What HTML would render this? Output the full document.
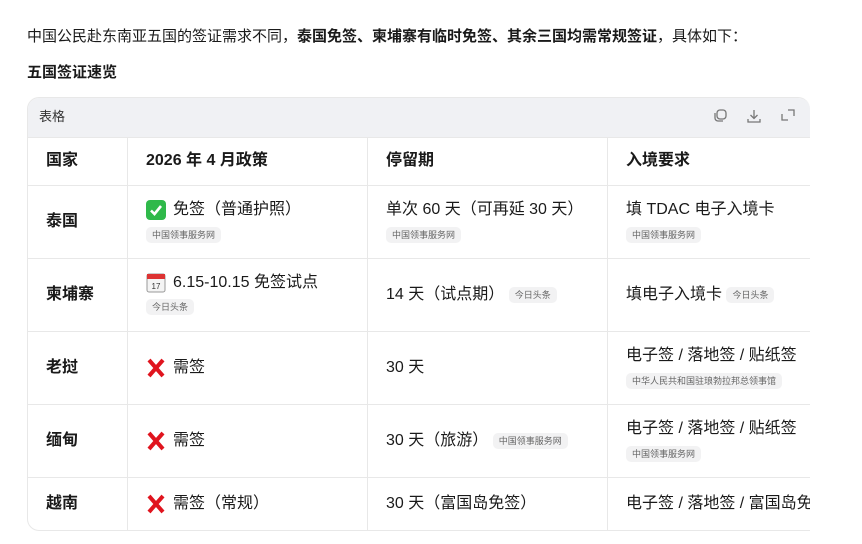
<!DOCTYPE html><html><head><meta charset="utf-8"><style>
*{margin:0;padding:0;box-sizing:border-box}
body{width:862px;height:544px;background:#fff;font-family:"Liberation Sans","Noto Sans CJK SC",sans-serif;color:#1a1a1a;position:relative;overflow:hidden}
.a{position:absolute;white-space:nowrap}
.t{font-size:15px;line-height:20px}
.c{font-size:16px;line-height:22px;height:22px}
.b{font-weight:bold}
.tag{display:inline-block;font-size:9px;line-height:16px;height:16px;padding:0 6px;background:#f2f2f3;border-radius:5px;color:#666;vertical-align:middle}
.hl{position:absolute;left:27px;width:783px;height:1px;background:#e8e8e8}
.vl{position:absolute;top:137px;height:393px;width:1px;background:#e8e8e8}
.ic{position:absolute;top:1px;width:20px;height:20px}
</style></head><body>
<div class="a t" style="left:27px;top:27px">中国公民赴东南亚五国的签证需求不同，<b>泰国免签、柬埔寨有临时免签、其余三国均需常规签证</b>，具体如下：</div>
<div class="a t b" style="left:27px;top:63px">五国签证速览</div>
<div class="a" style="left:27px;top:97px;width:783px;height:434px;border:1px solid #e8e8e8;border-right:none;border-radius:12px 12px 0 12px;overflow:hidden">
<div style="height:40px;background:#f0f1f4"></div></div>
<div class="a" style="left:39px;top:108px;font-size:13px;line-height:18px;color:#333">表格</div>
<svg class="a" style="left:712px;top:108px" width="84" height="16" viewBox="0 0 84 16" fill="none" stroke="#777" stroke-width="1.3">
<rect x="5" y="2" width="9" height="9" rx="3"/><path d="M3 5v5a3 3 0 0 0 3 3h5"/>
<path d="M42 2v8M38.5 7l3.5 3.5L45.5 7M36 11v3h12v-3"/>
<path d="M70 6v6h6M76 2h6v6"/>
</svg>
<div class="hl" style="top:137px"></div>
<div class="hl" style="top:185px"></div>
<div class="hl" style="top:258px"></div>
<div class="hl" style="top:331px"></div>
<div class="hl" style="top:404px"></div>
<div class="hl" style="top:477px"></div>
<div class="vl" style="left:127px"></div>
<div class="vl" style="left:367px"></div>
<div class="vl" style="left:607px"></div>
<div class="a c b" style="left:46px;top:150px">国家</div>
<div class="a c b" style="left:146px;top:150px">2026 年 4 月政策</div>
<div class="a c b" style="left:386px;top:150px">停留期</div>
<div class="a c b" style="left:626px;top:150px">入境要求</div>

<div class="a c b" style="left:46px;top:211px">泰国</div>
<div class="a c" style="left:146px;top:199px;padding-left:27px"><svg class="ic" style="left:0" viewBox="0 0 20 20"><rect width="20" height="20" rx="4" fill="#2fb94a"/><path d="M5 10.5l3.5 3.5L15 6" stroke="#fff" stroke-width="2.6" fill="none"/></svg>免签（普通护照）</div>
<div class="a" style="left:146px;top:226px"><span class="tag">中国领事服务网</span></div>
<div class="a c" style="left:386px;top:199px">单次 60 天（可再延 30 天）</div>
<div class="a" style="left:386px;top:226px"><span class="tag">中国领事服务网</span></div>
<div class="a c" style="left:626px;top:199px">填 TDAC 电子入境卡</div>
<div class="a" style="left:626px;top:226px"><span class="tag">中国领事服务网</span></div>

<div class="a c b" style="left:46px;top:284px">柬埔寨</div>
<div class="a c" style="left:146px;top:272px;padding-left:27px"><svg class="ic" style="left:0" viewBox="0 0 20 20"><rect x="1" y="1" width="18" height="18" rx="2" fill="#f4f4f4" stroke="#999"/><rect x="1" y="1" width="18" height="5" fill="#d33"/><text x="10" y="16" font-size="8" text-anchor="middle" fill="#333" font-family="Liberation Sans">17</text></svg>6.15-10.15 免签试点</div>
<div class="a" style="left:146px;top:298px"><span class="tag">今日头条</span></div>
<div class="a c" style="left:386px;top:284px">14 天（试点期） <span class="tag">今日头条</span></div>
<div class="a c" style="left:626px;top:284px">填电子入境卡 <span class="tag">今日头条</span></div>

<div class="a c b" style="left:46px;top:357px">老挝</div>
<div class="a c" style="left:146px;top:357px;padding-left:27px"><svg class="ic" style="left:0" viewBox="0 0 20 20"><path d="M3 2l14 16M17 2L3 18" stroke="#e0141e" stroke-width="4"/></svg>需签</div>
<div class="a c" style="left:386px;top:357px">30 天</div>
<div class="a c" style="left:626px;top:345px">电子签 / 落地签 / 贴纸签</div>
<div class="a" style="left:626px;top:372px"><span class="tag">中华人民共和国驻琅勃拉邦总领事馆</span></div>

<div class="a c b" style="left:46px;top:430px">缅甸</div>
<div class="a c" style="left:146px;top:430px;padding-left:27px"><svg class="ic" style="left:0" viewBox="0 0 20 20"><path d="M3 2l14 16M17 2L3 18" stroke="#e0141e" stroke-width="4"/></svg>需签</div>
<div class="a c" style="left:386px;top:430px">30 天（旅游） <span class="tag">中国领事服务网</span></div>
<div class="a c" style="left:626px;top:418px">电子签 / 落地签 / 贴纸签</div>
<div class="a" style="left:626px;top:445px"><span class="tag">中国领事服务网</span></div>

<div class="a c b" style="left:46px;top:493px">越南</div>
<div class="a c" style="left:146px;top:493px;padding-left:27px"><svg class="ic" style="left:0" viewBox="0 0 20 20"><path d="M3 2l14 16M17 2L3 18" stroke="#e0141e" stroke-width="4"/></svg>需签（常规）</div>
<div class="a c" style="left:386px;top:493px">30 天（富国岛免签）</div>
<div class="a" style="left:626px;top:493px;width:184px;overflow:hidden"><span class="c">电子签 / 落地签 / 富国岛免签</span></div>
</body></html>
